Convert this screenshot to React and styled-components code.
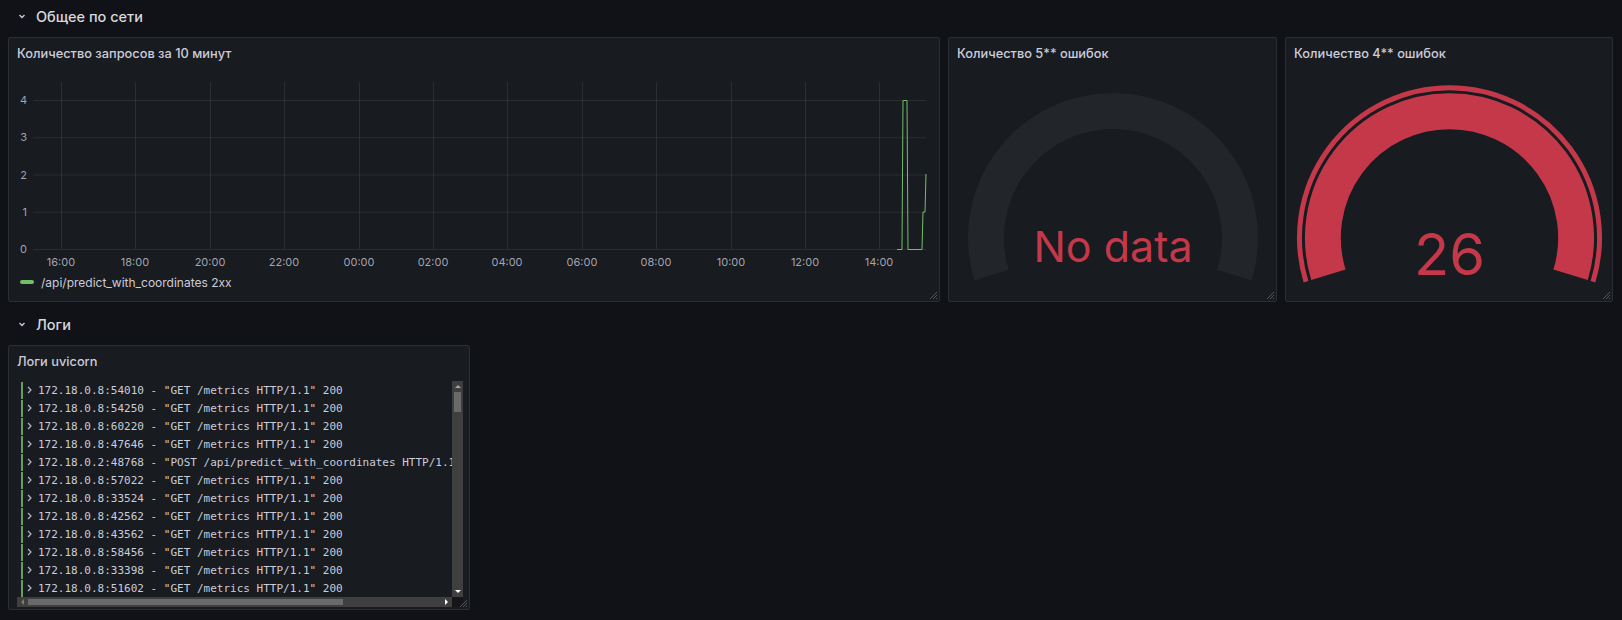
import React from "react";
import styled, { createGlobalStyle } from "styled-components";

const GlobalStyle = createGlobalStyle`
    html, body {
        margin: 0;
        padding: 0;
        background: #111217;
        font-family: Inter, "Noto Sans", "DejaVu Sans", sans-serif;
        color: #ccccdc;
    }
    * {
        box-sizing: border-box;
    }
`;

const RED = "#c4384a";
const GREEN = "#73bf69";

const Page = styled.div`
    width: 1622px;
    height: 620px;
    padding: 0 8px;
    overflow: hidden;
`;

const Section = styled.section`
    display: flex;
    flex-direction: column;
    gap: 5px;
    margin-top: ${props => props.$offset || 0}px;
`;

const RowHeader = styled.div`
    height: 32px;
    display: flex;
    align-items: center;
    padding-left: 9px;
    font-size: 14.5px;
    font-weight: 500;
    color: #d8d9de;
`;

const RowChevron = styled.svg`
    width: 10px;
    height: 10px;
    margin-right: 9px;
    flex: none;
`;

const PanelGrid = styled.div`
    display: grid;
    grid-template-columns: 932px 329px 328px;
    column-gap: 8px;
`;

const LogsGrid = styled.div`
    display: grid;
    grid-template-columns: 462px;
`;

const Panel = styled.div`
    position: relative;
    height: ${props => props.$height}px;
    background: #181b1f;
    border: 1px solid #2c2e33;
    border-radius: 2px;
    display: flex;
    flex-direction: column;
    overflow: hidden;
`;

const PanelTitle = styled.div`
    height: 30px;
    flex: none;
    display: flex;
    align-items: center;
    padding: 0 8px;
    font-size: 12.8px;
    font-weight: 500;
    color: #ccccdc;
    white-space: nowrap;
`;

const ResizeHandle = styled.svg`
    position: absolute;
    right: 1px;
    bottom: 1px;
    width: 9px;
    height: 9px;
`;

const ChartSvg = styled.svg`
    display: block;
    flex: none;
`;

const AxisText = styled.text`
    font-family: Inter, "Noto Sans", sans-serif;
    font-size: 11px;
    fill: rgba(204, 204, 220, 0.78);
`;

const Legend = styled.div`
    height: 20px;
    flex: none;
    display: flex;
    align-items: center;
    gap: 7px;
    padding-left: 11px;
    font-size: 12px;
    color: #ccccdc;
`;

const Swatch = styled.span`
    width: 14px;
    height: 4px;
    border-radius: 2px;
    background: ${GREEN};
`;

const GaugeSvg = styled.svg`
    display: block;
    flex: 1;
`;

const GaugeValue = styled.text`
    font-family: Inter, "Noto Sans", sans-serif;
    font-size: ${props => props.$size}px;
    fill: ${RED};
    text-anchor: middle;
`;

const LogBody = styled.div`
    flex: 1;
    padding: 5px 6px 7px 8px;
    display: flex;
`;

const LogFrame = styled.div`
    flex: 1;
    display: grid;
    grid-template-columns: 1fr 11px;
    grid-template-rows: 1fr 10px;
`;

const LogViewport = styled.div`
    overflow: hidden;
`;

const LogLine = styled.div`
    height: 18px;
    display: flex;
    align-items: center;
    white-space: pre;
    font-family: "DejaVu Sans Mono", "Liberation Mono", monospace;
    font-size: 11px;
    color: #ccccdc;
`;

const LevelBar = styled.span`
    width: 2px;
    height: 17px;
    margin-left: 4px;
    background: #6a9e5d;
    flex: none;
`;

const LineChevron = styled.svg`
    width: 5px;
    height: 8px;
    margin-left: 4px;
    margin-right: 6px;
    flex: none;
`;

const VTrack = styled.div`
    background: #3f3f3f;
    display: flex;
    flex-direction: column;
    align-items: center;
`;

const HTrack = styled.div`
    background: #3f3f3f;
    display: flex;
    align-items: center;
`;

const ArrowBox = styled.div`
    width: 11px;
    height: ${props => (props.$vertical ? "11px" : "10px")};
    flex: none;
    display: flex;
    align-items: center;
    justify-content: center;
`;

const Arrow = styled.span`
    width: 0;
    height: 0;
    border: 3px solid transparent;
    ${props => props.$dir === "up" && `border-bottom: 3px solid ${props.$color}; border-top-width: 0;`}
    ${props => props.$dir === "down" && `border-top: 3px solid ${props.$color}; border-bottom-width: 0;`}
    ${props => props.$dir === "left" && `border-right: 3px solid ${props.$color}; border-left-width: 0;`}
    ${props => props.$dir === "right" && `border-left: 3px solid ${props.$color}; border-right-width: 0;`}
`;

const VThumb = styled.div`
    width: 7px;
    height: 20px;
    background: #6a6a6a;
    flex: none;
`;

const HThumb = styled.div`
    width: 315px;
    height: 6px;
    background: #6a6a6a;
    flex: none;
`;

const Spacer = styled.div`
    flex: 1;
`;

const Corner = styled.div`
    background: #161618;
`;

const Resize = () => (
    <ResizeHandle viewBox="0 0 9 9">
        <path d="M1 8 L8 1 M4 8 L8 4 M7 8 L8 7" stroke="#54565c" strokeWidth="1" />
    </ResizeHandle>
);

const Chevron = () => (
    <RowChevron viewBox="0 0 10 10">
        <polyline points="2.5,4 5,6.5 7.5,4" fill="none" stroke="#ccccdc" strokeWidth="1.3" />
    </RowChevron>
);

const hours = ["16:00", "18:00", "20:00", "22:00", "00:00", "02:00", "04:00", "06:00", "08:00", "10:00", "12:00", "14:00"];
const yTicks = [4, 3, 2, 1, 0];
const yPos = v => 181 - v * 37.25;

const RequestsChart = () => (
    <ChartSvg width="930" height="204" viewBox="0 0 930 204">
        {yTicks.map(v => (
            <g key={v}>
                <line x1="24" x2="917" y1={yPos(v) + 0.5} y2={yPos(v) + 0.5} stroke="rgba(204,204,220,0.1)" />
                <AxisText x="18" y={yPos(v) + 4} textAnchor="end">{v}</AxisText>
            </g>
        ))}
        {hours.map((h, i) => {
            const x = Math.round(52 + 74.4 * i);
            return (
                <g key={h}>
                    <line x1={x + 0.5} x2={x + 0.5} y1="14" y2="181" stroke="rgba(204,204,220,0.1)" />
                    <AxisText x={x} y="198" textAnchor="middle">{h}</AxisText>
                </g>
            );
        })}
        <polyline
            points="888,181.5 893,181.5 894,32.5 898,32.5 899,181.5 913,181.5 914,144 916,144 917,106"
            fill="none"
            stroke={GREEN}
            strokeWidth="1"
        />
    </ChartSvg>
);

const polar = (cx, cy, r, deg) => {
    const a = (deg * Math.PI) / 180;
    return [cx + r * Math.cos(a), cy - r * Math.sin(a)];
};

const arc = (cx, cy, r, from, to) => {
    const [x0, y0] = polar(cx, cy, r, from);
    const [x1, y1] = polar(cx, cy, r, to);
    return `M ${x0} ${y0} A ${r} ${r} 0 1 1 ${x1} ${y1}`;
};

const CX = 164;
const CY = 170;
const START = 197;
const END = -17;

const Gauge = ({ value, fill, ring }) => (
    <GaugeSvg viewBox="0 0 327 233">
        <path d={arc(CX, CY, 127, START, END)} fill="none" stroke={fill} strokeWidth="36" />
        {ring && <path d={arc(CX, CY, 150.5, START, END)} fill="none" stroke={RED} strokeWidth="5" />}
        {value === null ? (
            <GaugeValue x={CX} y="194" $size={43}>No data</GaugeValue>
        ) : (
            <GaugeValue x={CX} y="207" $size={58}>{value}</GaugeValue>
        )}
    </GaugeSvg>
);

const logs = [
    ["172.18.0.8:54010", "GET /metrics HTTP/1.1"],
    ["172.18.0.8:54250", "GET /metrics HTTP/1.1"],
    ["172.18.0.8:60220", "GET /metrics HTTP/1.1"],
    ["172.18.0.8:47646", "GET /metrics HTTP/1.1"],
    ["172.18.0.2:48768", "POST /api/predict_with_coordinates HTTP/1.1"],
    ["172.18.0.8:57022", "GET /metrics HTTP/1.1"],
    ["172.18.0.8:33524", "GET /metrics HTTP/1.1"],
    ["172.18.0.8:42562", "GET /metrics HTTP/1.1"],
    ["172.18.0.8:43562", "GET /metrics HTTP/1.1"],
    ["172.18.0.8:58456", "GET /metrics HTTP/1.1"],
    ["172.18.0.8:33398", "GET /metrics HTTP/1.1"],
    ["172.18.0.8:51602", "GET /metrics HTTP/1.1"],
];

const LogsView = () => (
    <LogFrame>
        <LogViewport>
            {logs.map(([addr, req], i) => (
                <LogLine key={i}>
                    <LevelBar />
                    <LineChevron viewBox="0 0 5 8">
                        <polyline points="1,1 4,4 1,7" fill="none" stroke="#b8b8c4" strokeWidth="1.2" />
                    </LineChevron>
                    {`${addr} - "${req}" 200`}
                </LogLine>
            ))}
        </LogViewport>
        <VTrack>
            <ArrowBox $vertical><Arrow $dir="up" $color="#a3a3a3" /></ArrowBox>
            <VThumb />
            <Spacer />
            <ArrowBox $vertical><Arrow $dir="down" $color="#ffffff" /></ArrowBox>
        </VTrack>
        <HTrack>
            <ArrowBox><Arrow $dir="left" $color="#7a7a7a" /></ArrowBox>
            <HThumb />
            <Spacer />
            <ArrowBox><Arrow $dir="right" $color="#ffffff" /></ArrowBox>
        </HTrack>
        <Corner />
    </LogFrame>
);

const App = () => (
    <Page>
        <GlobalStyle />
        <Section>
            <RowHeader><Chevron />Общее по сети</RowHeader>
            <PanelGrid>
                <Panel $height={265}>
                    <PanelTitle>Количество запросов за 10 минут</PanelTitle>
                    <RequestsChart />
                    <Legend><Swatch />/api/predict_with_coordinates 2xx</Legend>
                    <Resize />
                </Panel>
                <Panel $height={265}>
                    <PanelTitle>Количество 5** ошибок</PanelTitle>
                    <Gauge value={null} fill="#22252a" />
                    <Resize />
                </Panel>
                <Panel $height={265}>
                    <PanelTitle>Количество 4** ошибок</PanelTitle>
                    <Gauge value={26} fill={RED} ring />
                    <Resize />
                </Panel>
            </PanelGrid>
        </Section>
        <Section $offset={6}>
            <RowHeader><Chevron />Логи</RowHeader>
            <LogsGrid>
                <Panel $height={265}>
                    <PanelTitle>Логи uvicorn</PanelTitle>
                    <LogBody>
                        <LogsView />
                    </LogBody>
                    <Resize />
                </Panel>
            </LogsGrid>
        </Section>
    </Page>
);

export default App;
